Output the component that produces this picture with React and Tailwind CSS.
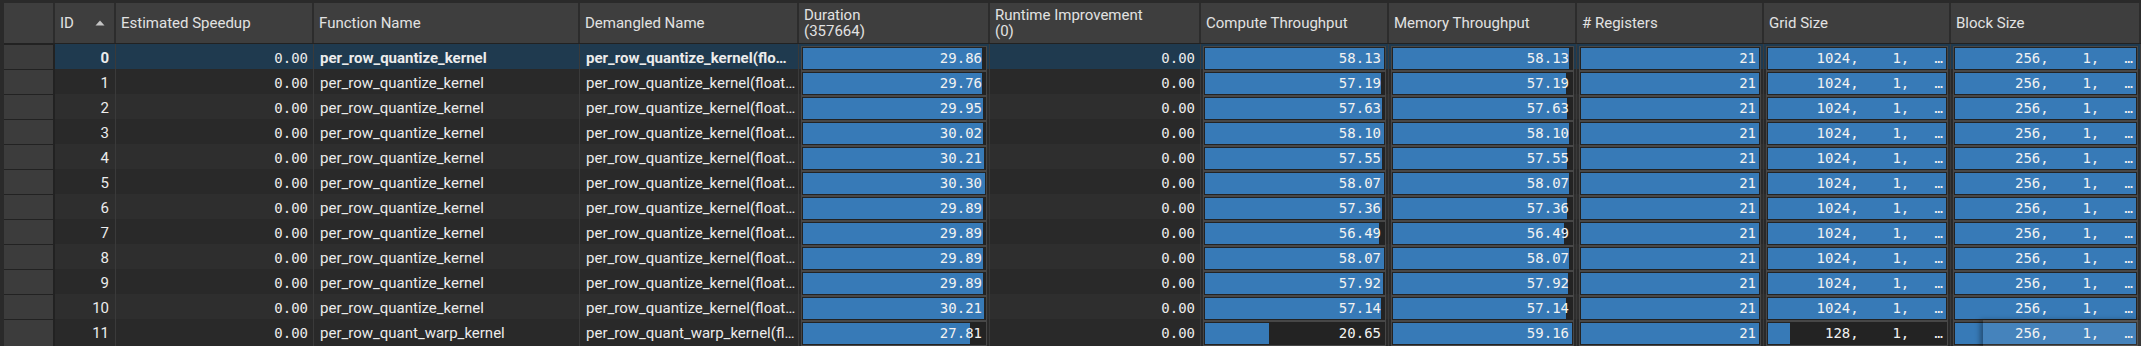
import React from "react";

// column template: row header, ID, Est. Speedup, Function, Demangled, Duration,
// Runtime Improvement, Compute, Memory, Registers, Grid, Block
const COLS =
  "grid grid-cols-[51px_61px_198px_266px_219px_191px_211px_188px_188px_187px_187px_1fr]";

const SANS = "font-['Roboto','Liberation_Sans',sans-serif]";
const MONO = "font-['DejaVu_Sans_Mono','Liberation_Mono',monospace]";

const Q = "per_row_quantize_kernel";
const W = "per_row_quant_warp_kernel";
// demangled names are shown clipped, the way the table elides them
const QD = "per_row_quantize_kernel(float\u2026";
const QD_SEL = "per_row_quantize_kernel(flo\u2026";
const WD = "per_row_quant_warp_kernel(fl\u2026";

const rows = [
  { id: 0, fn: Q, dm: QD_SEL, dur: 29.86, cmp: 58.13, mem: 58.13, grid: 1024 },
  { id: 1, fn: Q, dm: QD, dur: 29.76, cmp: 57.19, mem: 57.19, grid: 1024 },
  { id: 2, fn: Q, dm: QD, dur: 29.95, cmp: 57.63, mem: 57.63, grid: 1024 },
  { id: 3, fn: Q, dm: QD, dur: 30.02, cmp: 58.1, mem: 58.1, grid: 1024 },
  { id: 4, fn: Q, dm: QD, dur: 30.21, cmp: 57.55, mem: 57.55, grid: 1024 },
  { id: 5, fn: Q, dm: QD, dur: 30.3, cmp: 58.07, mem: 58.07, grid: 1024 },
  { id: 6, fn: Q, dm: QD, dur: 29.89, cmp: 57.36, mem: 57.36, grid: 1024 },
  { id: 7, fn: Q, dm: QD, dur: 29.89, cmp: 56.49, mem: 56.49, grid: 1024 },
  { id: 8, fn: Q, dm: QD, dur: 29.89, cmp: 58.07, mem: 58.07, grid: 1024 },
  { id: 9, fn: Q, dm: QD, dur: 29.89, cmp: 57.92, mem: 57.92, grid: 1024 },
  { id: 10, fn: Q, dm: QD, dur: 30.21, cmp: 57.14, mem: 57.14, grid: 1024 },
  { id: 11, fn: W, dm: WD, dur: 27.81, cmp: 20.65, mem: 59.16, grid: 128 },
];

const MAX = { dur: 30.3, cmp: 58.13, mem: 59.16, grid: 1024 };

function HeadCell({ children, className = "" }) {
  return (
    <div
      className={`flex items-center border-r-2 border-[#2c2c2c] px-[5px] text-[15px] leading-[16px] text-[#e2e2e2] ${className}`}
    >
      {children}
    </div>
  );
}

function Bar({ frac, text, overlay }) {
  return (
    <div className="relative h-full border-r border-[#3a3a3a] p-[2px]">
      <div className="h-full border border-[#474747] bg-[#232323] p-px">
        <div className="relative flex h-full items-center justify-end">
          <div
            className="absolute inset-y-0 left-0 bg-[#377ab7]"
            style={{ width: `${Math.min(frac, 1) * 100}%` }}
          />
          <span className={`relative whitespace-pre pr-[3px] text-[14px] text-[#f2f2f2] ${MONO}`}>
            {text}
          </span>
        </div>
      </div>
      {overlay && (
        <div className="absolute bottom-0 left-[32px] right-0 top-[1px] bg-[#ffffff12] shadow-[-3px_0_5px_rgba(0,0,0,0.35)]" />
      )}
    </div>
  );
}

function Cell({ children, className = "" }) {
  return (
    <div className={`flex items-center overflow-hidden whitespace-nowrap border-r border-[#3a3a3a] ${className}`}>
      {children}
    </div>
  );
}

export default function App() {
  return (
    <div className={`h-[346px] w-[2141px] overflow-hidden bg-[#2a2a2a] pl-[4px] pt-[3px] ${SANS}`}>
      {/* header */}
      <div className={`${COLS} h-[41px] border-b border-[#222] bg-[#3e3e3e]`}>
        <HeadCell />
        <HeadCell className="justify-between">
          <span>ID</span>
          <svg width="10" height="6" viewBox="0 0 10 6" className="mr-[4px]">
            <path d="M5 0.5 L9.5 5.5 L0.5 5.5 Z" fill="#c4c4c4" />
          </svg>
        </HeadCell>
        <HeadCell>Estimated Speedup</HeadCell>
        <HeadCell>Function Name</HeadCell>
        <HeadCell>Demangled Name</HeadCell>
        <HeadCell>
          <span>
            Duration
            <br />
            (357664)
          </span>
        </HeadCell>
        <HeadCell>
          <span>
            Runtime Improvement
            <br />
            (0)
          </span>
        </HeadCell>
        <HeadCell>Compute Throughput</HeadCell>
        <HeadCell>Memory Throughput</HeadCell>
        <HeadCell># Registers</HeadCell>
        <HeadCell>Grid Size</HeadCell>
        <HeadCell className="border-r-0">Block Size</HeadCell>
      </div>

      {/* body */}
      {rows.map((r, i) => {
        const sel = i === 0;
        const bg = sel ? "bg-[#1f3a4f]" : i % 2 ? "bg-[#292929]" : "bg-[#2e2e2e]";
        const weight = sel ? "font-bold" : "font-normal";
        const last = i === rows.length - 1;
        const gridText = r.grid === 1024 ? "1024,    1,   \u2026" : "128,    1,   \u2026";
        return (
          <div key={r.id} className={`${COLS} h-[25px] border-b border-[#3a3a3a] text-[#ececec]`}>
            <div className="border-b border-r-2 border-t border-[#222] bg-[#3c3c3c]" />
            <Cell className={`${bg} justify-end pr-[6px] text-[15px] ${weight}`}>{r.id}</Cell>
            <Cell className={`${bg} justify-end pr-[5px] text-[14px] ${MONO}`}>0.00</Cell>
            <Cell className={`${bg} pl-[6px] text-[15px] ${weight}`}>{r.fn}</Cell>
            <Cell className={`${bg} pl-[6px] text-[15px] ${weight}`}>{r.dm}</Cell>
            <div className={bg}>
              <Bar frac={r.dur / MAX.dur} text={r.dur.toFixed(2)} />
            </div>
            <Cell className={`${bg} justify-end pr-[5px] text-[14px] ${MONO}`}>0.00</Cell>
            <div className={bg}>
              <Bar frac={r.cmp / MAX.cmp} text={r.cmp.toFixed(2)} />
            </div>
            <div className={bg}>
              <Bar frac={r.mem / MAX.mem} text={r.mem.toFixed(2)} />
            </div>
            <div className={bg}>
              <Bar frac={1} text="21" />
            </div>
            <div className={bg}>
              <Bar frac={r.grid / MAX.grid} text={gridText} />
            </div>
            <div className={bg}>
              <Bar frac={1} text={"256,    1,   \u2026"} overlay={last} />
            </div>
          </div>
        );
      })}
    </div>
  );
}
